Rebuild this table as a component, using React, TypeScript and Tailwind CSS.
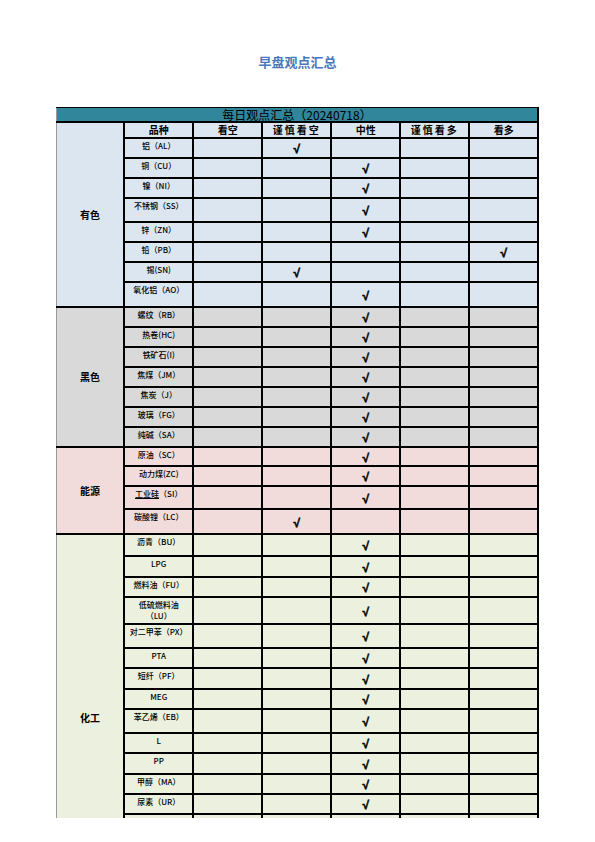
import React from "react";

type Item = { name: React.ReactNode; pick: number; h: string };
type Group = { label: string; bg: string; labelPad: string; items: Item[] };

const COLS = ["看空", "谨慎看空", "中性", "谨慎看多", "看多"];

const GROUPS: Group[] = [
    {
        label: "有色",
        bg: "bg-[#DCE6F1]",
        labelPad: "align-middle",
        items: [
            { name: "铝（AL）", pick: 1, h: "h-[20px]" },
            { name: "铜（CU）", pick: 2, h: "h-[20px]" },
            { name: "镍（NI）", pick: 2, h: "h-[20px]" },
            { name: "不锈钢（SS）", pick: 2, h: "h-[24px]" },
            { name: "锌（ZN）", pick: 2, h: "h-[20px]" },
            { name: "铅（PB）", pick: 4, h: "h-[20px]" },
            { name: "锡(SN)", pick: 1, h: "h-[20px]" },
            { name: "氧化铝（AO）", pick: 2, h: "h-[25px]" },
        ],
    },
    {
        label: "黑色",
        bg: "bg-[#D9D9D9]",
        labelPad: "align-middle",
        items: [
            { name: "螺纹（RB）", pick: 2, h: "h-[20px]" },
            { name: "热卷(HC)", pick: 2, h: "h-[20px]" },
            { name: "铁矿石(I)", pick: 2, h: "h-[20px]" },
            { name: "焦煤（JM）", pick: 2, h: "h-[20px]" },
            { name: "焦炭（J）", pick: 2, h: "h-[20px]" },
            { name: "玻璃（FG）", pick: 2, h: "h-[20px]" },
            { name: "纯碱（SA）", pick: 2, h: "h-[20px]" },
        ],
    },
    {
        label: "能源",
        bg: "bg-[#F2DCDB]",
        labelPad: "align-middle",
        items: [
            { name: "原油（SC）", pick: 2, h: "h-[19px]" },
            { name: "动力煤(ZC)", pick: 2, h: "h-[20px]" },
            { name: <><span className="underline">工业硅</span>（SI）</>, pick: 2, h: "h-[23px]" },
            { name: "碳酸锂（LC）", pick: 1, h: "h-[25px]" },
        ],
    },
    {
        label: "化工",
        bg: "bg-[#EBF1DE]",
        // the merged cell runs on past the page cut, so its label sits lower than the visible middle
        labelPad: "align-top pt-[177px]",
        items: [
            { name: "沥青（BU）", pick: 2, h: "h-[22px]" },
            { name: "LPG", pick: 2, h: "h-[21px]" },
            { name: "燃料油（FU）", pick: 2, h: "h-[20px]" },
            { name: <>低硫燃料油<br />（LU）</>, pick: 2, h: "h-[27px]" },
            { name: "对二甲苯（PX）", pick: 2, h: "h-[24px]" },
            { name: "PTA", pick: 2, h: "h-[20px]" },
            { name: "短纤（PF）", pick: 2, h: "h-[21px]" },
            { name: "MEG", pick: 2, h: "h-[20px]" },
            { name: "苯乙烯（EB）", pick: 2, h: "h-[24px]" },
            { name: "L", pick: 2, h: "h-[20px]" },
            { name: "PP", pick: 2, h: "h-[21px]" },
            { name: "甲醇（MA）", pick: 2, h: "h-[20px]" },
            { name: "尿素（UR）", pick: 2, h: "h-[20px]" },
            { name: "PVC", pick: -1, h: "h-[22px]" },
        ],
    },
];

const cell = "border-2 border-black p-0";

function CategoryCell({ group, span }: { group: Group; span: number }) {
    return (
        <td
            rowSpan={span}
            className={`${group.bg} ${group.labelPad} border-2 border-black border-l border-l-[#9a9a9a] px-0 pb-0 text-center text-[10px] font-bold leading-[12px] text-black`}
        >
            {group.label}
        </td>
    );
}

export default function App() {
    return (
        <div className="h-[842px] w-[595px] bg-white" style={{ fontFamily: '"Noto Sans CJK SC", "Noto Sans", sans-serif' }}>
            <div className="h-[818px] overflow-hidden">
                <h1 className="pt-[54px] text-center text-[13px] font-bold leading-[16px] text-[#4A78BC]">早盘观点汇总</h1>

                <table className="mx-auto mt-[37px] w-[483px] table-fixed border-collapse text-black">
                    <colgroup>
                        <col className="w-[68px]" />
                        <col className="w-[69px]" />
                        <col className="w-[69px]" />
                        <col className="w-[69px]" />
                        <col className="w-[69px]" />
                        <col className="w-[69px]" />
                        <col className="w-[69px]" />
                    </colgroup>
                    <tbody>
                        <tr className="h-[14px]">
                            <td
                                colSpan={7}
                                className="border border-black border-l-[#9a9a9a] border-r-2 bg-[#31869B] p-0 text-center text-[12px] leading-[13px]"
                            >
                                每日观点汇总（20240718）
                            </td>
                        </tr>
                        <tr className="h-[16px]">
                            <CategoryCell group={GROUPS[0]} span={GROUPS[0].items.length + 1} />
                            <td className={`${cell} bg-[#DCE6F1] text-center text-[10px] font-bold leading-[12px]`}>品种</td>
                            {COLS.map((c) => (
                                <td
                                    key={c}
                                    className={`${cell} bg-[#DCE6F1] text-center text-[10px] font-bold leading-[12px] ${c.length > 2 ? "tracking-[2px]" : ""}`}
                                >
                                    {c}
                                </td>
                            ))}
                        </tr>
                        {GROUPS.map((group, gi) =>
                            group.items.map((item, ii) => (
                                <tr key={`${gi}-${ii}`} className={item.h}>
                                    {gi > 0 && ii === 0 && <CategoryCell group={group} span={group.items.length} />}
                                    <td className={`${cell} ${group.bg} whitespace-nowrap pt-[1px] text-center align-top text-[8px] font-medium leading-[11px] text-black`}>
                                        {item.name}
                                    </td>
                                    {COLS.map((c, ci) => (
                                        <td
                                            key={c}
                                            className={`${cell} ${group.bg} pt-[2px] text-center align-middle font-['Liberation_Sans',sans-serif] text-[12px] font-bold leading-[12px] [-webkit-text-stroke:0.5px_#000]`}
                                        >
                                            {item.pick === ci ? "√" : ""}
                                        </td>
                                    ))}
                                </tr>
                            ))
                        )}
                    </tbody>
                </table>
            </div>
        </div>
    );
}
